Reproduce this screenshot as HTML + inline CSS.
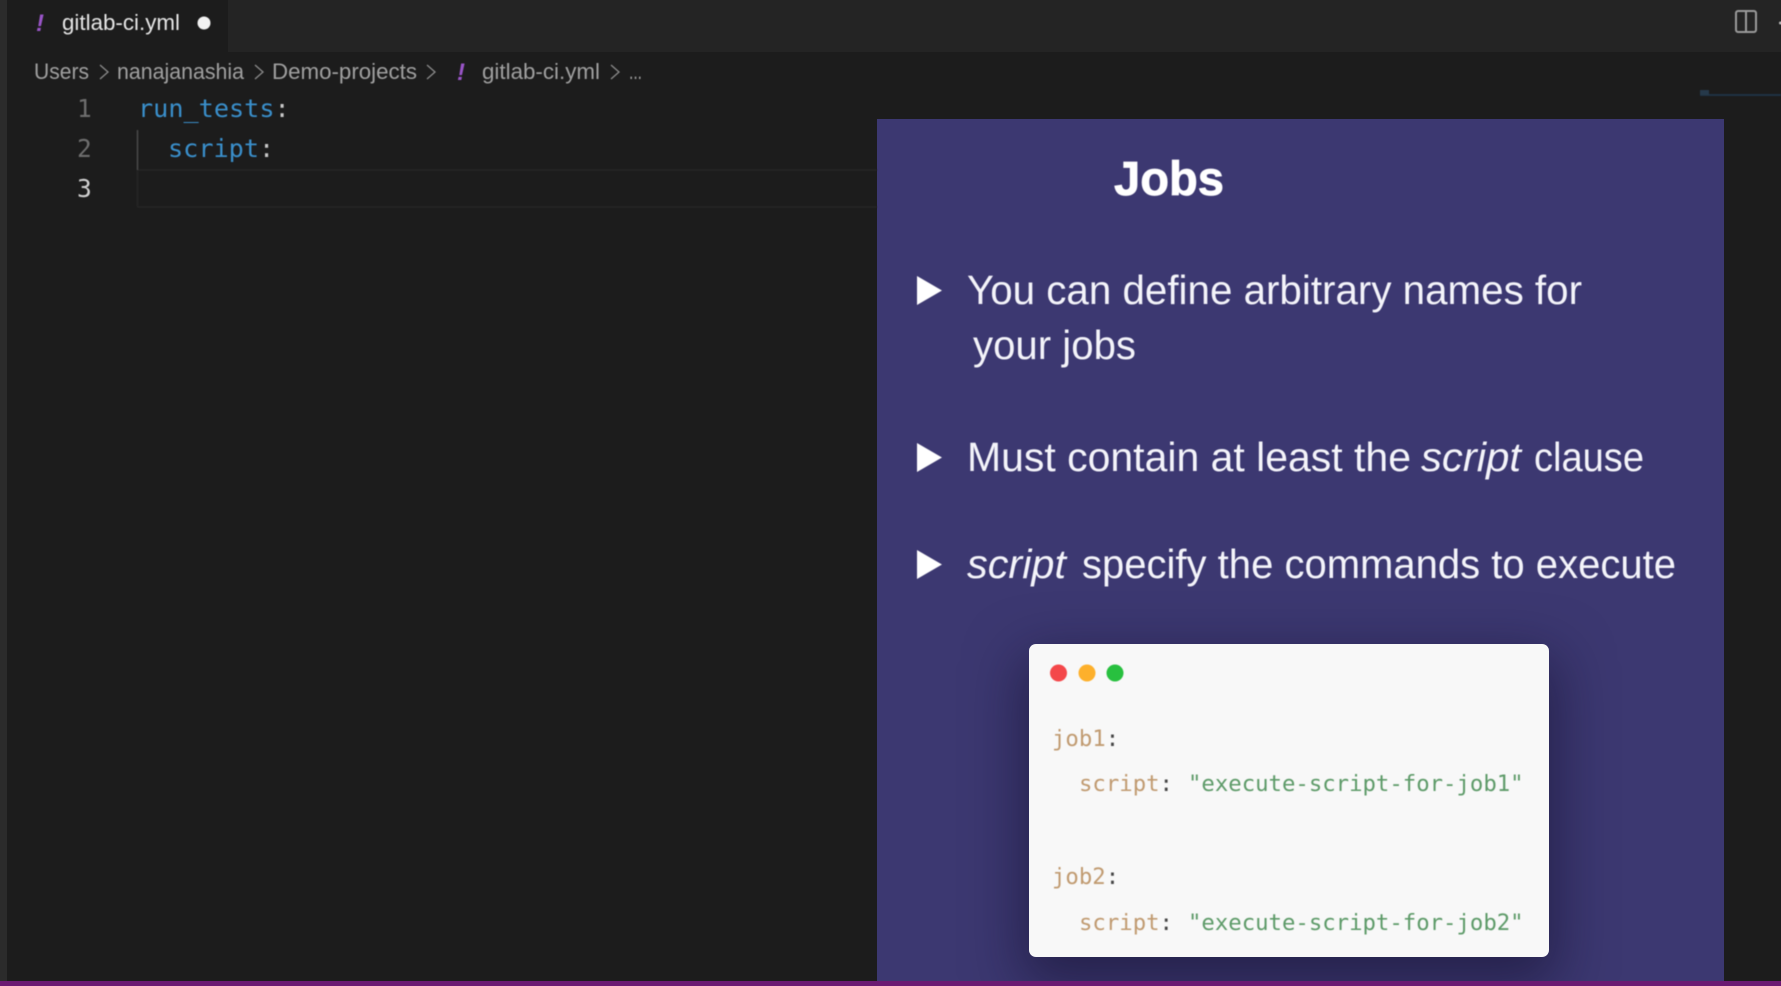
<!DOCTYPE html>
<html lang="en">
<head>
<meta charset="utf-8">
<title>gitlab-ci.yml</title>
<style>
html,body{margin:0;padding:0;width:1781px;height:986px;overflow:hidden;background:#1c1c1c}
.abs{position:absolute}
#strip{left:0;top:0;width:7px;height:981px;background:#2b2b2b}
#tabbar{left:7px;top:0;width:1774px;height:52px;background:#242424}
#tab{left:7px;top:0;width:221px;height:52px;background:#1c1c1c}
#slide{left:877px;top:119px;width:847px;height:862px;background:#3c3871;overflow:hidden}
#card{left:152px;top:525px;width:520px;height:313px;background:#f8f8f8;border-radius:7px;box-shadow:0 20px 55px 8px rgba(15,12,40,.5)}
#bar{left:0;top:981px;width:1781px;height:5px;background:#6b1a72}
svg{position:absolute;left:0;top:0}
text{white-space:pre}
.ui{font-family:"Liberation Sans",sans-serif}
.m{font-family:"DejaVu Sans Mono",monospace}
</style>
</head>
<body>
<div class="abs" id="tabbar"></div>
<div class="abs" id="tab"></div>
<div class="abs" id="strip"></div>
<div class="abs" id="slide"><div class="abs" id="card"></div></div>
<div class="abs" id="bar"></div>
<svg width="1781" height="986" viewBox="0 0 1781 986" xmlns="http://www.w3.org/2000/svg">
<g style="filter:blur(.5px)">
  <!-- tab -->
  <text class="ui" x="36" y="31" font-size="24" font-weight="700" font-style="italic" fill="#9a55c8">!</text>
  <text class="ui" x="62" y="30" font-size="22" fill="#e6e6e6" textLength="118" lengthAdjust="spacingAndGlyphs">gitlab-ci.yml</text>
  <circle cx="204" cy="23" r="6.5" fill="#f2f2f2"/>
  <!-- split icon -->
  <rect x="1736" y="11" width="20" height="21" rx="2" fill="none" stroke="#9a9a9a" stroke-width="2"/>
  <line x1="1746" y1="11" x2="1746" y2="32" stroke="#9a9a9a" stroke-width="2"/>
  <circle cx="1780.5" cy="23" r="1.5" fill="#bbb"/>
  <!-- minimap mark -->
  <rect x="1700" y="94" width="81" height="2" fill="#1f3244"/>
  <rect x="1700" y="90" width="9" height="5" fill="#26394a"/>
  <!-- breadcrumbs -->
  <g font-size="22.500" fill="#a0a0a0" class="ui">
    <text x="34" y="79" textLength="55" lengthAdjust="spacingAndGlyphs">Users</text>
    <text x="117" y="79" textLength="127" lengthAdjust="spacingAndGlyphs">nanajanashia</text>
    <text x="272" y="79" textLength="145" lengthAdjust="spacingAndGlyphs">Demo-projects</text>
    <text x="482" y="79" textLength="118" lengthAdjust="spacingAndGlyphs">gitlab-ci.yml</text>
    <text x="629" y="79" textLength="13" lengthAdjust="spacingAndGlyphs">...</text>
  </g>
  <text class="ui" x="457" y="80" font-size="24" font-weight="700" font-style="italic" fill="#9a55c8">!</text>
  <g fill="none" stroke="#8c8c8c" stroke-width="1.300">
    <path d="M100 65l8 7-8 7"/>
    <path d="M255 65l8 7-8 7"/>
    <path d="M427 65l8 7-8 7"/>
    <path d="M611 65l8 7-8 7"/>
  </g>
  <!-- current-line box + indent guide -->
  <path d="M137.500 170H877M137.500 207H877M137.500 170V207" stroke="#262626" stroke-width="1.500" fill="none"/>
  <line x1="137.500" y1="130" x2="137.500" y2="170" stroke="#4a4a4a" stroke-width="1.500"/>
  <!-- line numbers -->
  <g class="m" font-size="24.500" fill="#6e6e6e">
    <text x="77" y="117">1</text>
    <text x="77" y="157">2</text>
    <text x="77" y="197" fill="#d0d0d0">3</text>
  </g>
  <!-- code -->
  <g class="m" font-size="25.200">
    <text x="138" y="117" fill="#3a8fcb">run_tests<tspan fill="#c8c8c8">:</tspan></text>
    <text x="168" y="157" fill="#3a8fcb">script<tspan fill="#c8c8c8">:</tspan></text>
  </g>
  <!-- slide -->
  <text class="ui" x="1114" y="195" font-size="48" font-weight="700" fill="#fff" stroke="#fff" stroke-width=".8" textLength="110" lengthAdjust="spacingAndGlyphs">Jobs</text>
  <g fill="#fff">
    <path d="M917 276L942 290.500 917 305Z"/>
    <path d="M917 443L942 457.500 917 472Z"/>
    <path d="M917 550L942 564.500 917 579Z"/>
  </g>
  <g class="ui" font-size="41" fill="#f4f4fa">
    <text x="967" y="304" textLength="615" lengthAdjust="spacingAndGlyphs">You can define arbitrary names for</text>
    <text x="973" y="359" textLength="163" lengthAdjust="spacingAndGlyphs">your jobs</text>
    <text x="967" y="471" textLength="444" lengthAdjust="spacingAndGlyphs">Must contain at least the</text>
    <text x="1421" y="471" font-style="italic" textLength="100" lengthAdjust="spacingAndGlyphs">script</text>
    <text x="1534" y="471" textLength="110" lengthAdjust="spacingAndGlyphs">clause</text>
    <text x="967" y="578" font-style="italic" textLength="99" lengthAdjust="spacingAndGlyphs">script</text>
    <text x="1082" y="578" textLength="594" lengthAdjust="spacingAndGlyphs">specify the commands to execute</text>
  </g>
  <!-- card content -->
  <circle cx="1058.500" cy="673" r="8.500" fill="#f4474a"/>
  <circle cx="1087" cy="673" r="8.500" fill="#fdb02c"/>
  <circle cx="1115" cy="673" r="8.500" fill="#28c03f"/>
  <g class="m" font-size="22.300">
    <text x="1052" y="746" fill="#c09a70">job1<tspan fill="#444">:</tspan></text>
    <text x="1079" y="791" fill="#c09a70">script<tspan fill="#444">:</tspan></text>
    <text x="1188" y="791" fill="#5d9a68">"execute-script-for-job1"</text>
    <text x="1052" y="884" fill="#c09a70">job2<tspan fill="#444">:</tspan></text>
    <text x="1079" y="930" fill="#c09a70">script<tspan fill="#444">:</tspan></text>
    <text x="1188" y="930" fill="#5d9a68">"execute-script-for-job2"</text>
  </g>
</g>
</svg>
</body>
</html>
